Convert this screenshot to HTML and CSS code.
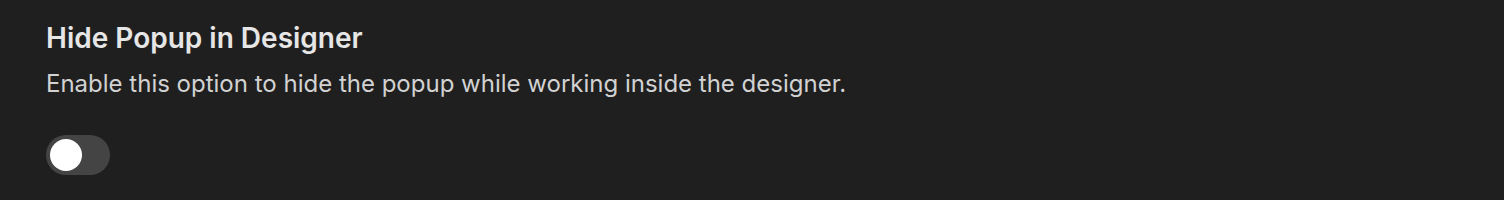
FILE: index.html
```html
<!DOCTYPE html>
<html>
<head>
<meta charset="utf-8">
<link rel="stylesheet" href="styles.css">
</head>
<body>
<div class="setting">
  <h2 class="title">Hide Popup in Designer</h2>
  <p class="desc">Enable this option to hide the popup while working inside the designer.</p>
  <div class="toggle"><span class="knob"></span></div>
</div>
</body>
</html>
```
FILE: styles.css
```css
html, body {
  margin: 0;
  padding: 0;
  background: #1f1f1f;
  height: 100%;
}
body {
  font-family: Inter, "Liberation Sans", sans-serif;
}
.setting {
  padding: 21px 46px 0;
  display: flex;
  flex-direction: column;
  align-items: flex-start;
}
.title {
  margin: 0;
  font-size: 28px;
  line-height: 34px;
  font-weight: 600;
  color: #e6e6e6;
}
.desc {
  margin: 13px 0 0;
  font-size: 24px;
  line-height: 32px;
  font-weight: 400;
  color: #d2d2d2;
}
.toggle {
  margin-top: 35px;
  width: 64px;
  height: 40px;
  border-radius: 20px;
  background: #444444;
  display: flex;
  align-items: center;
  padding: 0 4px;
  box-sizing: border-box;
}
.knob {
  width: 32px;
  height: 32px;
  border-radius: 50%;
  background: #ffffff;
}
```
